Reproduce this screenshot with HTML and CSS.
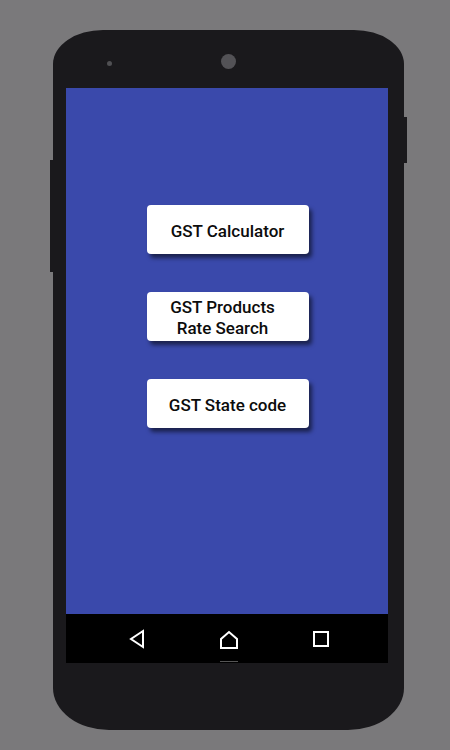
FILE: index.html
```html
<!DOCTYPE html>
<html>
<head>
<meta charset="utf-8">
<link rel="stylesheet" href="styles.css">
</head>
<body>
<div class="phone">
  <div class="side-btn left"></div>
  <div class="side-btn right"></div>
  <div class="top">
    <span class="sensor"></span>
    <span class="camera"></span>
  </div>
  <div class="screen">
    <div class="content">
      <div class="btn">GST Calculator</div>
      <div class="btn btn-two">GST Products<br>Rate Search</div>
      <div class="btn">GST State code</div>
    </div>
    <div class="navbar">
      <svg class="nav-icon" width="18" height="20" viewBox="0 0 18 20"><path d="M15 2 L3 10 L15 18 Z" fill="none" stroke="#fff" stroke-width="2" stroke-linejoin="miter"/></svg>
      <div class="home-wrap">
        <svg class="nav-icon" width="20" height="20" viewBox="0 0 20 20"><path d="M2 18 L2 9 L10 2 L18 9 L18 18 Z" fill="none" stroke="#fff" stroke-width="2"/></svg>
      </div>
      <svg class="nav-icon" width="18" height="20" viewBox="0 0 18 20"><rect x="2" y="3" width="14" height="14" fill="none" stroke="#fff" stroke-width="2"/></svg>
    </div>
  </div>
</div>
</body>
</html>
```
FILE: styles.css
```css
html, body {
  margin: 0;
  padding: 0;
}
body {
  width: 450px;
  height: 750px;
  background: #7a797b;
  overflow: hidden;
  font-family: Roboto, "Liberation Sans", sans-serif;
}
.phone {
  position: relative;
  box-sizing: border-box;
  width: 351px;
  height: 700px;
  margin: 30px 0 0 53px;
  background: #1a191c;
  border-radius: 50px 50px 56px 56px / 34px 34px 42px 42px;
  padding: 0 16px 0 13px;
  display: flex;
  flex-direction: column;
}
.side-btn {
  position: absolute;
  width: 3px;
  background: #1a191c;
}
.side-btn.left {
  left: -3px;
  top: 130px;
  height: 112px;
}
.side-btn.right {
  right: -3px;
  top: 87px;
  height: 46px;
}
.top {
  height: 58px;
  display: flex;
  align-items: center;
  padding-top: 4px;
  box-sizing: border-box;
}
.sensor {
  width: 5px;
  height: 5px;
  border-radius: 50%;
  background: #505053;
  margin-left: 41px;
  margin-top: 4px;
}
.camera {
  width: 15px;
  height: 15px;
  border-radius: 50%;
  background: #535256;
  margin-left: 109px;
}
.screen {
  width: 322px;
  height: 575px;
  display: flex;
  flex-direction: column;
}
.content {
  height: 526px;
  background: #3a49ab;
  display: flex;
  flex-direction: column;
  align-items: center;
  padding-top: 117px;
  box-sizing: border-box;
  gap: 38px;
}
.btn {
  width: 162px;
  height: 49px;
  box-sizing: border-box;
  margin-left: 1px;
  padding-top: 3px;
  background: #fff;
  border-radius: 4px;
  box-shadow: 3px 4px 4px rgba(0, 0, 0, 0.55);
  display: flex;
  align-items: center;
  justify-content: center;
  text-align: center;
  font-weight: 500;
  font-size: 17px;
  line-height: 21px;
  color: #0c0c0c;
}
.btn-two {
  padding-right: 10px;
  padding-top: 2px;
}
.navbar {
  flex: 1;
  background: #000;
  display: flex;
  align-items: center;
  justify-content: space-between;
  padding: 0 58px 0 62px;
  box-sizing: border-box;
}
.nav-icon {
  display: block;
}
.home-wrap {
  position: relative;
  padding-top: 2px;
}
.home-wrap::after {
  content: "";
  position: absolute;
  left: 1px;
  bottom: -12px;
  width: 18px;
  height: 1px;
  background: #555;
}
```
